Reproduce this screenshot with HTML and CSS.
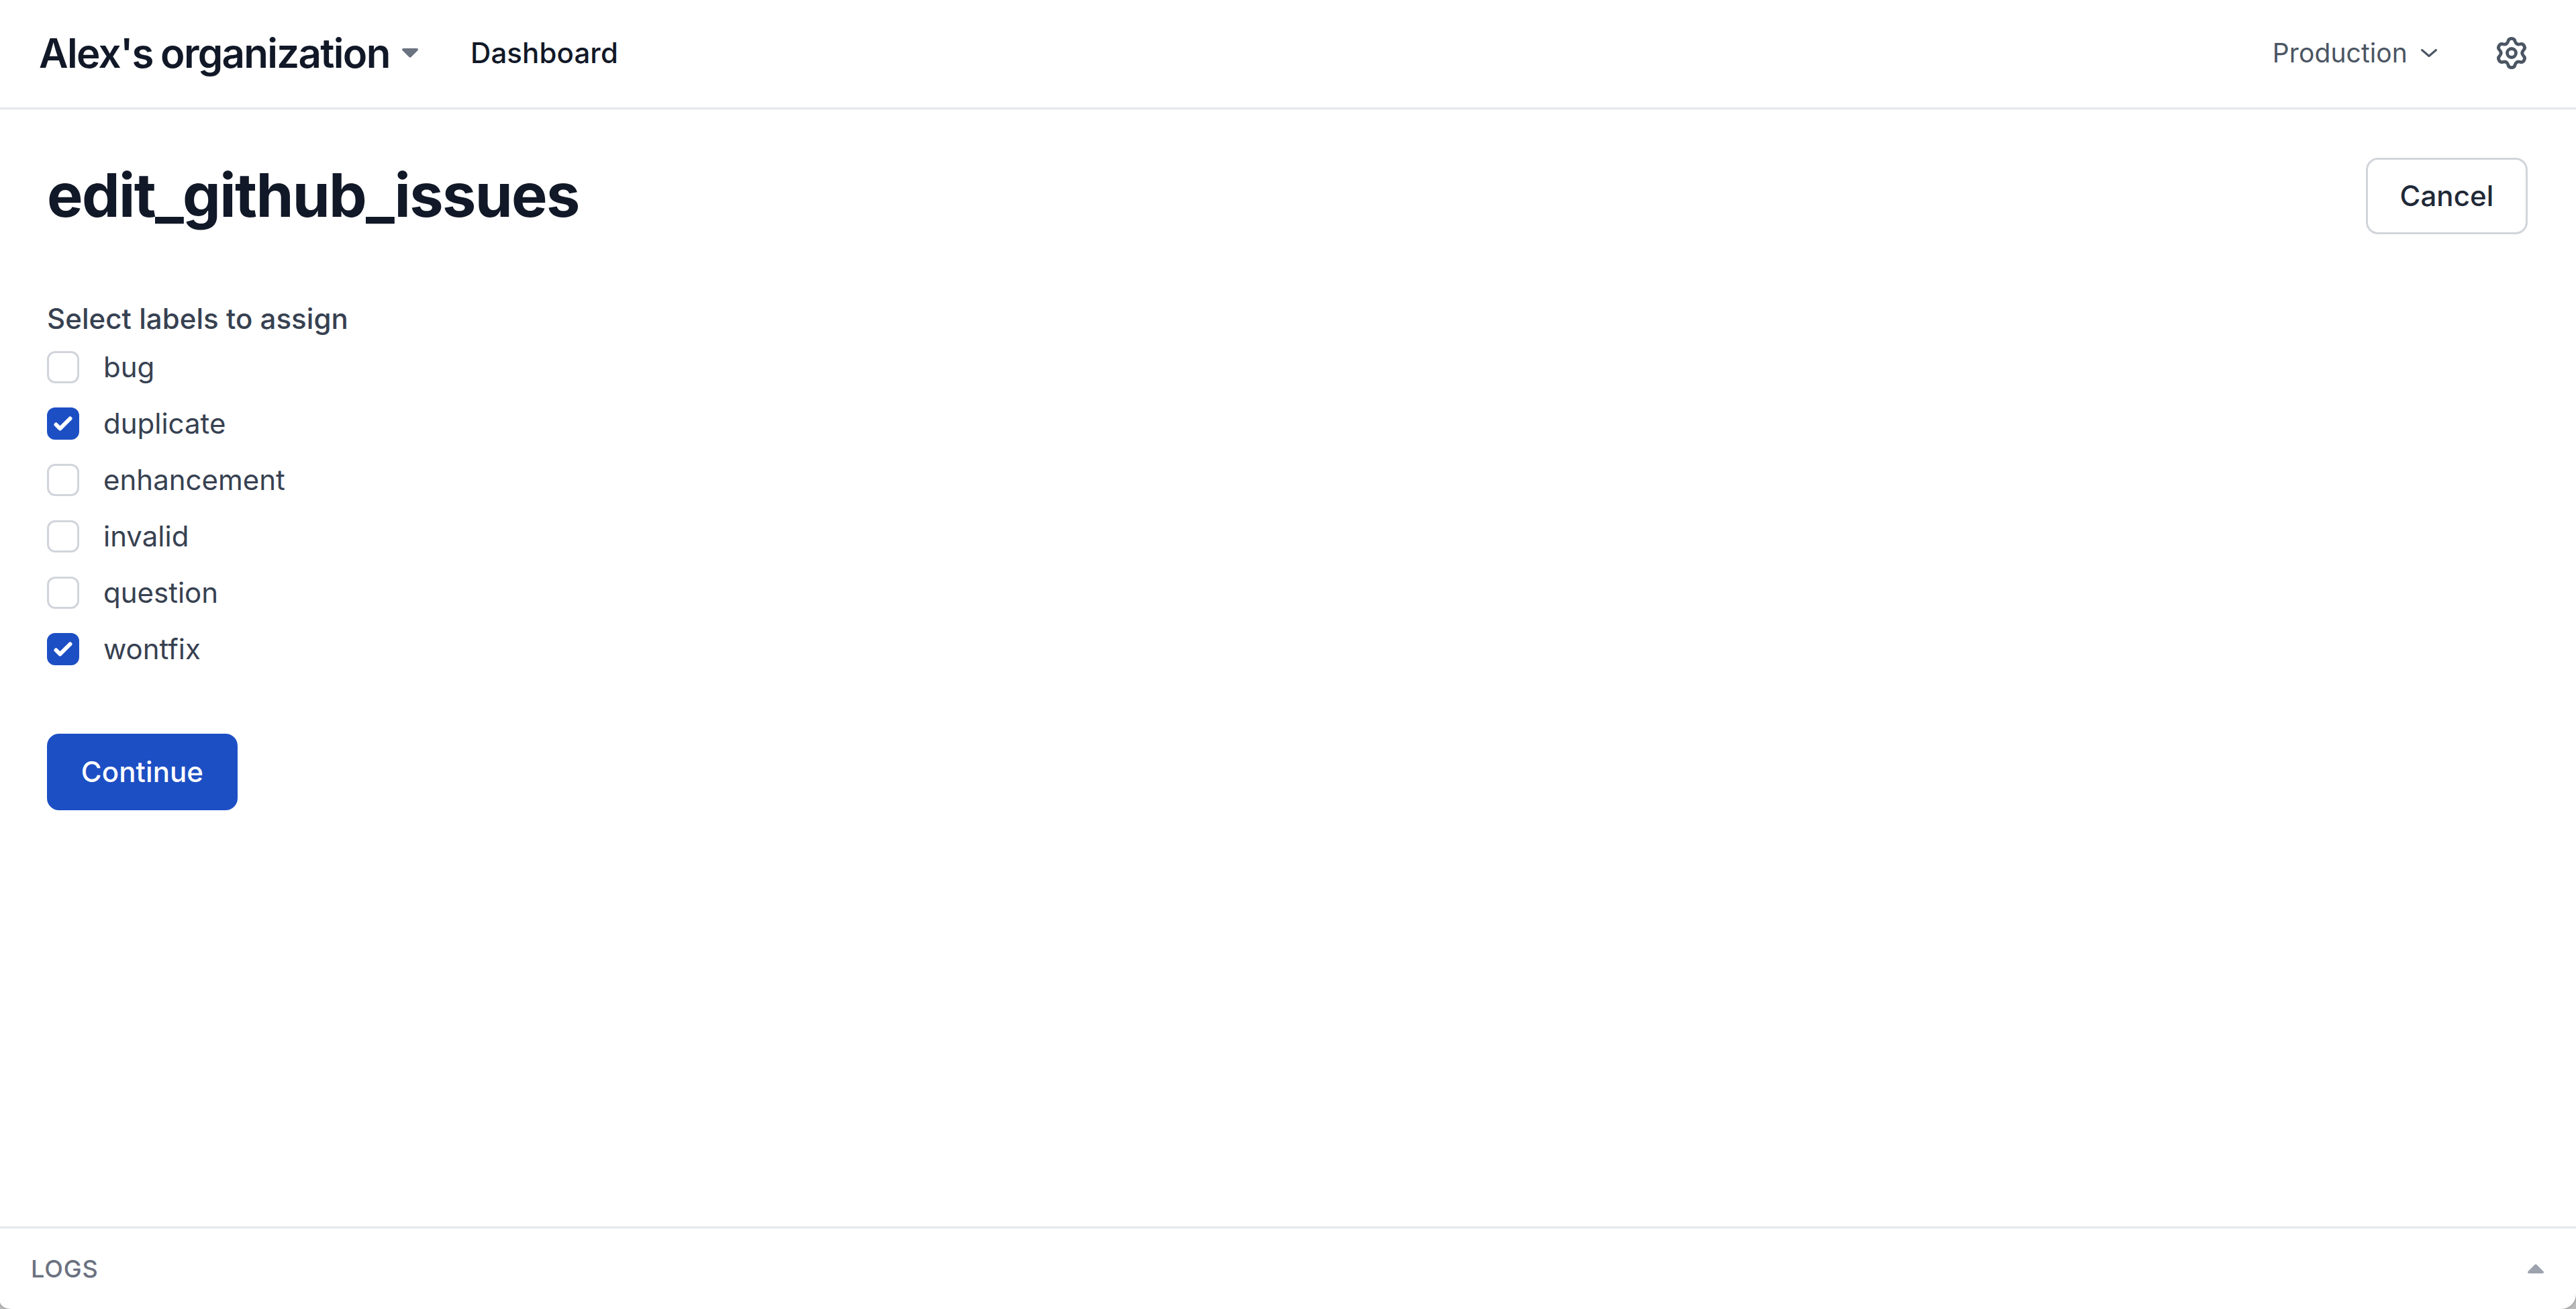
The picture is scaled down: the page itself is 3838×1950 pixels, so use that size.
FILE: index.html
```html
<!DOCTYPE html>
<html lang="en">
<head>
<meta charset="utf-8">
<meta name="viewport" content="width=device-width, initial-scale=1">
<title>edit_github_issues</title>
<link rel="stylesheet" href="styles.css">
</head>

<body>
<div class="window">
  <header class="topbar">
    <span class="org-name">Alex's organization</span>
    <svg class="org-caret" viewBox="0 0 24 14"><path d="M2 0h20q3 .5 1.500 3L13.500 13q-1.500 1.500-3 0L.5 3Q-1 .5 2 0z" fill="#6b7280"/></svg>
    <a class="nav-link">Dashboard</a>
    <div class="env">
      <span class="env-name">Production</span>
      <svg class="env-chevron" viewBox="0 0 26 14"><path d="M2.500 2.500L13 11.500 23.500 2.500" fill="none" stroke="#4b5563" stroke-width="3" stroke-linecap="round" stroke-linejoin="round"/></svg>
    </div>
    <svg class="gear" viewBox="-29 -29 58 58" fill="none" stroke="#4b5563" stroke-width="4.800" stroke-linecap="round">
      <defs>
        <path id="tooth" d="M-7.900-13.700C-6.200-14.700-5.600-15.800-5.200-17.500C-4.600-20.400-3.400-21.600 0-21.600C3.400-21.600 4.600-20.400 5.200-17.500C5.600-15.800 6.200-14.700 7.900-13.700"/>
      </defs>
      <use href="#tooth"/>
      <use href="#tooth" transform="rotate(60)"/>
      <use href="#tooth" transform="rotate(120)"/>
      <use href="#tooth" transform="rotate(180)"/>
      <use href="#tooth" transform="rotate(240)"/>
      <use href="#tooth" transform="rotate(300)"/>
      <circle r="6.500"/>
    </svg>
  </header>

  <main class="content">
    <div class="title-row">
      <h1>edit_github_issues</h1>
      <button class="btn btn-cancel">Cancel</button>
    </div>

    <form>
      <div class="legend">Select labels to assign</div>
      <label class="option">
        <span class="box"><input type="checkbox"></span>
        <span class="name">bug</span>
      </label>
      <label class="option">
        <span class="box"><input type="checkbox" checked><svg viewBox="0 0 16 16"><path d="M12.207 4.793a1 1 0 010 1.414l-5 5a1 1 0 01-1.414 0l-2-2a1 1 0 011.414-1.414L6.500 9.086l4.293-4.293a1 1 0 011.414 0z"/></svg></span>
        <span class="name">duplicate</span>
      </label>
      <label class="option">
        <span class="box"><input type="checkbox"></span>
        <span class="name">enhancement</span>
      </label>
      <label class="option">
        <span class="box"><input type="checkbox"></span>
        <span class="name">invalid</span>
      </label>
      <label class="option">
        <span class="box"><input type="checkbox"></span>
        <span class="name">question</span>
      </label>
      <label class="option">
        <span class="box"><input type="checkbox" checked><svg viewBox="0 0 16 16"><path d="M12.207 4.793a1 1 0 010 1.414l-5 5a1 1 0 01-1.414 0l-2-2a1 1 0 011.414-1.414L6.500 9.086l4.293-4.293a1 1 0 011.414 0z"/></svg></span>
        <span class="name">wontfix</span>
      </label>
      <button type="button" class="btn btn-primary">Continue</button>
    </form>
  </main>

  <footer class="logs">
    <span>LOGS</span>
    <svg class="logs-caret" viewBox="0 0 24 14"><path d="M2 14h20q3-.5 1.500-3L13.500 1q-1.500-1.500-3 0L.5 11Q-1 13.500 2 14z" fill="#9ca3af"/></svg>
  </footer>
</div>
</body>
</html>
```
FILE: styles.css
```css
* { box-sizing: border-box; }

body {
    margin: 0;
    background: #b9bab9;
    font-family: Inter, "Liberation Sans", sans-serif;
    color: #374151;
    overflow: hidden;
}

.window {
    display: flex;
    flex-direction: column;
    height: 1950px;
    background: #fff;
    border-radius: 0 0 22px 17px / 0 0 22px 11px;
    box-shadow: 0 0 3px #777;
}

.topbar {
    display: flex;
    align-items: center;
    height: 163px;
    padding: 0 67px 2px 58px;
    border-bottom: 3px solid #e5e7eb;
}

.org-name {
    width: 524px;
    font-size: 60px;
    font-weight: 600;
    letter-spacing: -1.7px;
    word-spacing: -2px;
    white-space: nowrap;
    color: #111827;
}

.org-caret {
    width: 24px;
    height: 14px;
    margin-left: 17px;
}

.nav-link {
    margin: 0 0 2px 78px;
    font-size: 42px;
    font-weight: 500;
    letter-spacing: 0.1px;
    color: #111827;
}

.env {
    display: flex;
    align-items: center;
    margin-left: auto;
    font-size: 39px;
    letter-spacing: 0.1px;
    color: #4b5563;
}

.env-name {
    margin-bottom: 2px;
}

.env-chevron {
    width: 26px;
    height: 14px;
    margin-left: 19px;
}

.gear {
    width: 58px;
    height: 58px;
    margin-left: 81px;
}

.content {
    flex: 1;
    padding: 72px 72px 0 70px;
}

.title-row {
    display: flex;
    align-items: center;
    justify-content: space-between;
}

h1 {
    margin: 0 0 2px;
    font-size: 90px;
    font-weight: 700;
    letter-spacing: -1.7px;
    line-height: 108px;
    color: #111827;
}

.btn {
    height: 114px;
    padding: 0 0 2px;
    border: 3px solid #d1d5db;
    border-radius: 18px;
    background: #fff;
    font-family: inherit;
    font-size: 42px;
    font-weight: 500;
    letter-spacing: 0.1px;
    color: #1f2937;
}

.btn-cancel {
    width: 241px;
}

.btn-primary {
    width: 284px;
    margin-top: 84px;
    border-color: #1d4fc4;
    background: #1d4fc4;
    color: #fff;
}

.legend {
    margin-top: 96px;
    font-size: 42px;
    font-weight: 500;
    letter-spacing: 0.05px;
    line-height: 60px;
}

.option {
    display: flex;
    align-items: center;
    height: 84px;
    font-size: 42px;
}

.option .name {
    margin-bottom: 2px;
}

.box {
    display: grid;
    width: 48px;
    height: 48px;
    margin-right: 36px;
}

.box input,
.box svg {
    grid-area: 1 / 1;
    width: 48px;
    height: 48px;
}

.box input {
    appearance: none;
    margin: 0;
    border: 3px solid #d1d5db;
    border-radius: 12px;
    background: #fff;
}

.box input:checked {
    border-color: #1d4fc4;
    background: #1d4fc4;
}

.box svg {
    fill: #fff;
}

.logs {
    display: flex;
    align-items: center;
    justify-content: space-between;
    height: 123px;
    padding: 0 48px 0 46px;
    border-top: 3px solid #e5e7eb;
    font-size: 36px;
    font-weight: 500;
    letter-spacing: 0.9px;
    color: #6b7280;
}

.logs-caret {
    width: 24px;
    height: 14px;
}
```
